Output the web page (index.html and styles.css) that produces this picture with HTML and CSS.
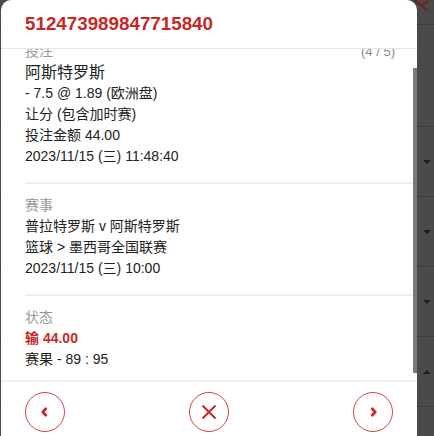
FILE: index.html
```html
<!DOCTYPE html>
<html lang="zh">

<head>
    <meta charset="UTF-8">
    <meta name="viewport" content="width=device-width, initial-scale=1.0">
    <title>注单详情</title>
    <link rel="stylesheet" href="styles.css">
</head>

<body>
    <!-- 背景页面 -->
    <div class="page">
        <div class="topbar">
            <svg class="search" width="18" height="12" viewBox="0 0 18 12">
                <path d="M0 0 L8 6 L14 1 M8 6 L14 11" fill="none" stroke="#6c2222" stroke-width="2.2" />
            </svg>
        </div>
        <div class="row row-tall"></div>
        <div class="row"><i class="caret"></i></div>
        <div class="row"><i class="caret"></i></div>
        <div class="row"><i class="caret"></i></div>
        <div class="row"><i class="caret up"></i></div>
        <div class="row"></div>
    </div>

    <!-- 弹窗 -->
    <div class="modal">
        <div class="modal-head">
            <h2 class="ticket">512473989847715840</h2>
        </div>

        <div class="modal-body">
            <div class="scroll">
                <section class="block">
                    <div class="block-head">
                        <span class="label">投注</span>
                        <span class="count">(4 / 5)</span>
                    </div>
                    <div class="pick">阿斯特罗斯</div>
                    <div class="line">- 7.5 @ 1.89 (欧洲盘)</div>
                    <div class="line">让分 (包含加时赛)</div>
                    <div class="line">投注金额 44.00</div>
                    <div class="line">2023/11/15 (三) 11:48:40</div>
                </section>

                <section class="block">
                    <div class="label">赛事</div>
                    <div class="line">普拉特罗斯 v 阿斯特罗斯</div>
                    <div class="line">篮球 &gt; 墨西哥全国联赛</div>
                    <div class="line">2023/11/15 (三) 10:00</div>
                </section>

                <section class="block">
                    <div class="label">状态</div>
                    <div class="line lose">输 44.00</div>
                    <div class="line">赛果 - 89 : 95</div>
                </section>
            </div>
            <div class="thumb"></div>
        </div>

        <div class="modal-foot">
            <button class="circle-btn">
                <svg width="12" height="12" viewBox="0 0 12 12">
                    <path d="M7.5 2 L3.8 6 L7.5 10" fill="none" stroke="#c62828" stroke-width="2.6" />
                </svg>
            </button>
            <button class="circle-btn">
                <svg width="16" height="16" viewBox="0 0 16 16">
                    <path d="M1.5 1.5 L14.5 14.5 M14.5 1.5 L1.5 14.5" fill="none" stroke="#c62828" stroke-width="2" />
                </svg>
            </button>
            <button class="circle-btn">
                <svg width="12" height="12" viewBox="0 0 12 12">
                    <path d="M4.5 2 L8.2 6 L4.5 10" fill="none" stroke="#c62828" stroke-width="2.6" />
                </svg>
            </button>
        </div>
    </div>
</body>

</html>
```

FILE: styles.css
```css
html,
body {
    margin: 0;
    padding: 0;
    height: 100%;
    overflow: hidden;
}

body {
    background-color: #4a4a4a;
    font-family: "Liberation Sans", "Noto Sans CJK SC", sans-serif;
    color: #222;
    position: relative;
}

/* 背景页面 */
.page {
    width: 100%;
}

.topbar {
    height: 24px;
    border-bottom: 1px solid #3e3e3e;
    display: flex;
    justify-content: flex-end;
    align-items: flex-start;
    padding-right: 2px;
}

.row {
    height: 69px;
    border-bottom: 1px solid #3e3e3e;
    display: flex;
    justify-content: flex-end;
    align-items: center;
    padding-right: 3px;
}

.row-tall {
    height: 101px;
}

.caret {
    width: 0;
    height: 0;
    border-left: 4px solid transparent;
    border-right: 4px solid transparent;
    border-top: 4px solid #1c1c1c;
}

.caret.up {
    border-top: 0;
    border-bottom: 4px solid #1c1c1c;
}

/* 弹窗 */
.modal {
    position: absolute;
    left: 1px;
    top: 0;
    width: 416px;
    height: 460px;
    background-color: #fff;
    border-radius: 10px 10px 0 0;
    overflow: hidden;
}

.modal-head {
    height: 48px;
    border-bottom: 1px solid #e6e6e6;
    display: flex;
    align-items: center;
    padding-left: 24px;
}

.ticket {
    margin: 0;
    font-size: 18.8px;
    font-weight: bold;
    color: #c62828;
    line-height: 22px;
}

.modal-body {
    height: 331px;
    overflow: hidden;
    position: relative;
}

.scroll {
    margin-top: -19px;
}

.block {
    margin-left: 24px;
    margin-right: 4px;
    padding: 11px 18px 15px 0;
    border-bottom: 2px solid #ececec;
    font-size: 14px;
    line-height: 21px;
}

.block:last-child {
    border-bottom: 0;
}

.block-head {
    display: flex;
    justify-content: space-between;
}

.label {
    color: #999;
}

.count {
    color: #888;
    font-size: 13px;
}

.pick {
    font-size: 16px;
}

.lose {
    color: #c62828;
    font-weight: bold;
}

.thumb {
    position: absolute;
    right: 0;
    top: 19px;
    width: 4px;
    height: 305px;
    background-color: #7a7a7a;
}

.modal-foot {
    border-top: 2px solid #f1f1f1;
    padding: 10px 24px;
    display: flex;
    justify-content: space-between;
}

.circle-btn {
    width: 40px;
    height: 40px;
    border: 1px solid #cf4545;
    border-radius: 50%;
    background-color: #fff;
    padding: 0;
    display: flex;
    align-items: center;
    justify-content: center;
    cursor: pointer;
}
```
